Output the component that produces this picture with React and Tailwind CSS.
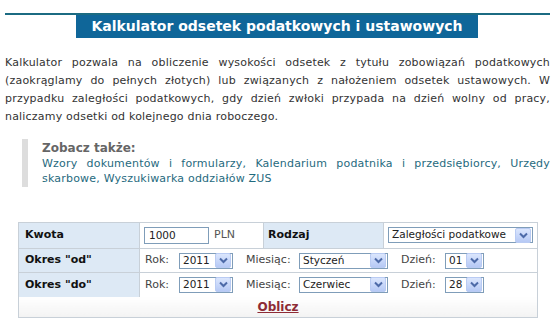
import React from "react";

function Arrow() {
  return (
    <span className="flex h-[15px] w-[16px] shrink-0 items-center justify-center rounded-[2px] border border-[#b9cbf3] bg-gradient-to-b from-[#dbe6fd] to-[#b6c9f5]">
      <svg width="9" height="7" viewBox="0 0 9 7">
        <path d="M1 1.5 L4.5 5 L8 1.5" fill="none" stroke="#4d6aa8" strokeWidth="2" />
      </svg>
    </span>
  );
}

function Select({ value, width }) {
  return (
    <span
      className={`inline-flex h-[16px] shrink-0 items-center justify-between whitespace-nowrap border border-[#7f9db9] bg-white pl-[3px] pr-[1px] text-[10.5px] text-[#222] ${width}`}
    >
      <span>{value}</span>
      <Arrow />
    </span>
  );
}

function DateRow({ label, month, day }) {
  return (
    <tr className="h-[24px] border-t border-[#c8d0d8]">
      <td className="bg-[#dde9f5] pl-[6px] font-bold text-[#111]">{label}</td>
      <td colSpan={3} className="border-l border-[#c8d0d8] bg-white pl-[5px]">
        <div className="flex items-center whitespace-nowrap text-[#444]">
          <span className="w-[34px] shrink-0">Rok:</span>
          <Select value="2011" width="w-[54px]" />
          <span className="ml-[13px] w-[53px] shrink-0">Miesiąc:</span>
          <Select value={month} width="w-[89px]" />
          <span className="ml-[13px] w-[44px] shrink-0">Dzień:</span>
          <Select value={day} width="w-[39px]" />
        </div>
      </td>
    </tr>
  );
}

export default function App() {
  return (
    <div className="h-[325px] w-[555px] overflow-hidden bg-white font-['DejaVu_Sans',Verdana,sans-serif] text-[11px] text-[#333]">
      <div className="px-[5px] pt-[13px]">
        <div className="border-t-[2px] border-[#1b6b82]">
          <div className="ml-[71px] flex h-[23px] w-[402px] items-center justify-center bg-[#0f6699] text-[14px] font-bold text-white">
            Kalkulator odsetek podatkowych i ustawowych
          </div>
        </div>
      </div>

      <p className="mt-[16px] px-[5px] text-justify leading-[18px] tracking-[0.2px] text-[#333]">
        Kalkulator pozwala na obliczenie wysokości odsetek z tytułu zobowiązań podatkowych (zaokrąglamy do pełnych złotych) lub związanych z nałożeniem odsetek ustawowych. W przypadku zaległości podatkowych, gdy dzień zwłoki przypada na dzień wolny od pracy, naliczamy odsetki od kolejnego dnia roboczego.
      </p>

      <div className="mt-[13px] ml-[22px] mr-[5px] border-l-[6px] border-[#dddddd] py-[1px] pl-[14px]">
        <div className="text-[12px] font-bold leading-[16px] text-[#666]">Zobacz także:</div>
        <div className="text-justify leading-[15px] tracking-[0.2px] text-[#1f6a7e]">
          Wzory dokumentów i formularzy, Kalendarium podatnika i przedsiębiorcy, Urzędy skarbowe, Wyszukiwarka oddziałów ZUS
        </div>
      </div>

      <table className="mt-[35px] ml-[18px] w-[519px] table-fixed border-collapse border border-[#c8d0d8]">
        <colgroup>
          <col className="w-[121px]" />
          <col className="w-[124px]" />
          <col className="w-[120px]" />
          <col className="w-[154px]" />
        </colgroup>
        <tbody>
          <tr className="h-[26px]">
            <td className="bg-[#dde9f5] pl-[6px] font-bold text-[#111]">Kwota</td>
            <td className="border-l border-[#c8d0d8] bg-white pl-[4px]">
              <div className="flex items-center">
                <span className="flex h-[17px] w-[65px] items-center border border-[#7f9db9] pl-[4px] text-[10.5px] text-[#222]">
                  1000
                </span>
                <span className="ml-[5px] text-[#555]">PLN</span>
              </div>
            </td>
            <td className="border-l border-[#c8d0d8] bg-[#dde9f5] pl-[4px] font-bold text-[#111]">Rodzaj</td>
            <td className="border-l border-[#c8d0d8] bg-white pl-[4px]">
              <Select value="Zaległości podatkowe" width="w-[145px]" />
            </td>
          </tr>
          <DateRow label='Okres "od"' month="Styczeń" day="01" />
          <DateRow label='Okres "do"' month="Czerwiec" day="28" />
          <tr className="h-[21px]">
            <td colSpan={4} className="bg-gradient-to-b from-white to-[#f3f3f3] text-center">
              <a href="#" className="text-[12px] font-bold text-[#8e2b35] underline">
                Oblicz
              </a>
            </td>
          </tr>
        </tbody>
      </table>
    </div>
  );
}
